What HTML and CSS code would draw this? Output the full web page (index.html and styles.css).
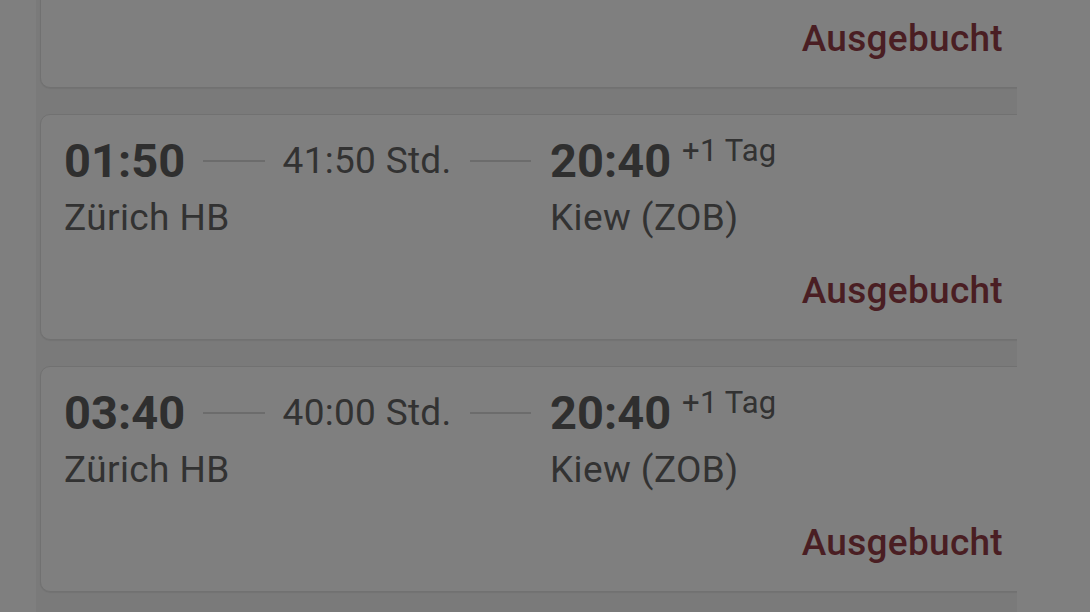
FILE: index.html
```html
<!DOCTYPE html>
<html lang="de">
<head>
<meta charset="utf-8">
<title>Verbindungen</title>
<link rel="stylesheet" href="styles.css">
</head>
<body>
<div class="page">
  <div class="list">
    <div class="card card-partial">
      <div class="status">Ausgebucht</div>
    </div>
    <div class="card">
      <div class="trip">
        <div class="dep">
          <span class="time">01:50</span>
          <span class="rule"></span>
          <span class="duration">41:50 Std.</span>
          <span class="rule"></span>
        </div>
        <div class="arr">
          <span class="time">20:40</span>
          <span class="plus">+1 Tag</span>
        </div>
        <div class="station">Zürich HB</div>
        <div class="station">Kiew (ZOB)</div>
      </div>
      <div class="status">Ausgebucht</div>
    </div>
    <div class="card">
      <div class="trip">
        <div class="dep">
          <span class="time">03:40</span>
          <span class="rule"></span>
          <span class="duration">40:00 Std.</span>
          <span class="rule"></span>
        </div>
        <div class="arr">
          <span class="time">20:40</span>
          <span class="plus">+1 Tag</span>
        </div>
        <div class="station">Zürich HB</div>
        <div class="station">Kiew (ZOB)</div>
      </div>
      <div class="status">Ausgebucht</div>
    </div>
  </div>
</div>
</body>
</html>
```
FILE: styles.css
```css
html, body {
  margin: 0;
  padding: 0;
}
body {
  background: #7f7f7f;
  font-family: Roboto, "Noto Sans", "Liberation Sans", sans-serif;
  color: #303030;
  height: 612px;
  overflow: hidden;
}
.page {
  padding-left: 36px;
  height: 612px;
}
.list {
  width: 981px;
  height: 612px;
  background: #7a7a7a;
  overflow: hidden;
  display: flex;
  flex-direction: column;
  gap: 26px;
  padding-left: 4px;
  box-sizing: border-box;
}
.card {
  flex: none;
  width: 987px;
  box-sizing: border-box;
  background: #7f7f7f;
  border: 1px solid #717171;
  border-radius: 10px;
  padding: 19px 23px 27px 23px;
  box-shadow: 0 1px 1px rgba(0,0,0,0.06);
}
.card-partial {
  margin-top: -138px;
  height: 226px;
  display: flex;
  flex-direction: column;
  justify-content: flex-end;
}
.trip {
  display: grid;
  grid-template-columns: 486px auto;
  row-gap: 9px;
}
.dep {
  display: flex;
  align-items: center;
  gap: 18px;
  padding-right: 19px;
}
.time {
  font-size: 47px;
  line-height: 54px;
  font-weight: 700;
  color: #2f2f2f;
}
.rule {
  flex: 1;
  height: 2px;
  background: #6c6c6c;
}
.duration {
  font-size: 37px;
  letter-spacing: 0.3px;
  line-height: 54px;
  color: #323232;
}
.arr {
  display: flex;
  align-items: flex-start;
}
.plus {
  font-size: 31px;
  letter-spacing: 0.2px;
  line-height: 34px;
  margin-left: 11px;
  color: #323232;
}
.station {
  font-size: 37px;
  letter-spacing: 0.4px;
  line-height: 42px;
  color: #323232;
}
.status {
  margin-top: 31px;
  text-align: right;
  font-size: 37px;
  letter-spacing: 0.3px;
  line-height: 42px;
  font-weight: 500;
  color: #4a1e23;
}
.card-partial .status {
  margin-top: 0;
}
```
